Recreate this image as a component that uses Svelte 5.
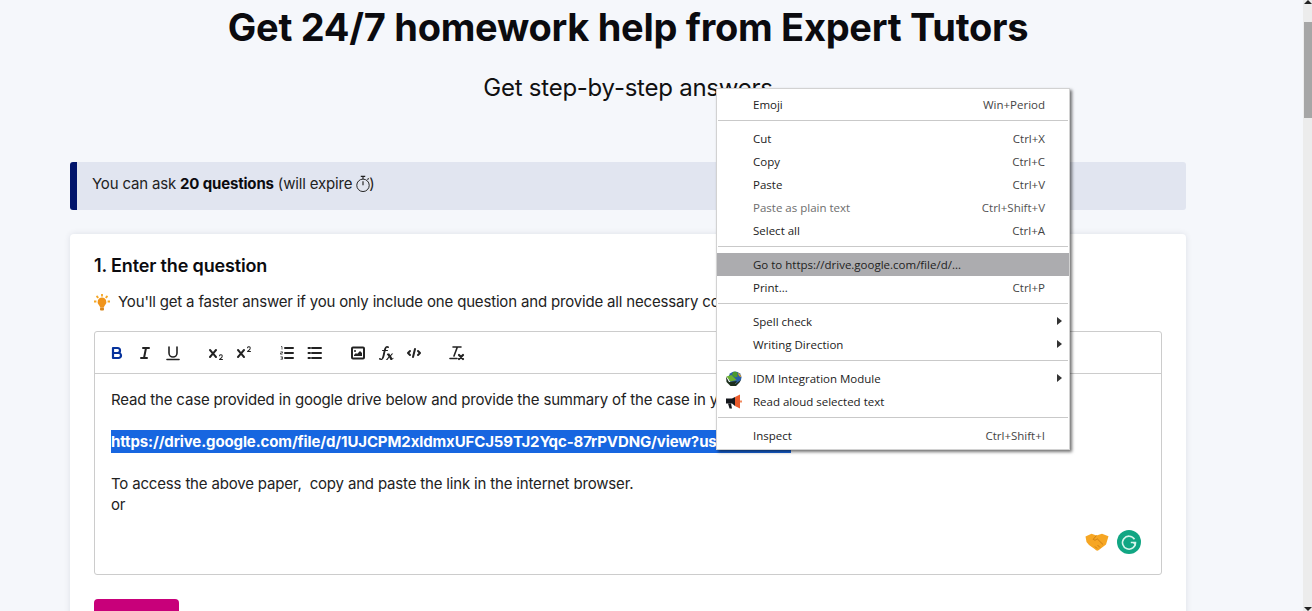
<script>
  const menu = [
    [{ l: 'Emoji', s: 'Win+Period' }],
    [{ l: 'Cut', s: 'Ctrl+X' }, { l: 'Copy', s: 'Ctrl+C' }, { l: 'Paste', s: 'Ctrl+V' }, { l: 'Paste as plain text', s: 'Ctrl+Shift+V', off: true }, { l: 'Select all', s: 'Ctrl+A' }],
    [{ l: 'Go to https://drive.google.com/file/d/...', hot: true }, { l: 'Print...', s: 'Ctrl+P' }],
    [{ l: 'Spell check', sub: true }, { l: 'Writing Direction', sub: true }],
    [{ l: 'IDM Integration Module', sub: true, icon: 'idm' }, { l: 'Read aloud selected text', icon: 'speak' }],
    [{ l: 'Inspect', s: 'Ctrl+Shift+I' }]
  ];
</script>

<div class="page">
  <main class="main">
    <div class="content">
      <h1>Get 24/7 homework help from Expert Tutors</h1>
      <h2>Get step-by-step answers</h2>

      <div class="alert">You can ask <b>20 questions</b> (will expire <svg class="watch" viewBox="0 0 18 20" width="16" height="18" aria-hidden="true">
          <circle cx="9" cy="11.5" r="7" fill="none" stroke="#222" stroke-width="1.1"/>
          <path d="M6.5 1.500h5M9 1.500v3M9 11.500V7M14 5l1.400-1.400" fill="none" stroke="#222" stroke-width="1.300"/>
        </svg>)</div>

      <section class="card">
        <h3>1. Enter the question</h3>
        <p class="hint">
          <svg viewBox="0 0 16 17" width="16" height="17" aria-hidden="true">
            <path d="M8 3.500a4.500 4.500 0 0 0-3 7.800c.7.700 1 1.300 1 2.200h4c0-.9.300-1.500 1-2.200a4.500 4.500 0 0 0-3-7.800z" fill="#f0941a"/>
            <rect x="6" y="13.500" width="4" height="3" rx="1" fill="#d9861a"/>
            <path d="M8 0v2.500M2.500 2l1.800 1.800M13.500 2l-1.800 1.800M0 7.500h2.400M13.600 7.500H16" stroke="#f5a623" stroke-width="1.800" fill="none"/>
          </svg>
          <span>You'll get a faster answer if you only include one question and provide all necessary context and details.</span>
        </p>

        <div class="editor">
          <div class="toolbar">
            <div class="group">
              <span class="tb"><svg viewBox="0 0 18 18" class="ic blue"><path d="M5,4H9.500A2.500,2.500,0,0,1,12,6.500v0A2.500,2.500,0,0,1,9.500,9H5V4Z"/><path d="M5,9h5.500A2.500,2.500,0,0,1,13,11.500v0A2.500,2.500,0,0,1,10.500,14H5V9Z"/></svg></span>
              <span class="tb"><svg viewBox="0 0 18 18" class="ic"><path d="M7 4h6M5 14h6M10 4 8 14"/></svg></span>
              <span class="tb"><svg viewBox="0 0 18 18" class="ic thin"><path d="M5,3V9a4,4,0,0,0,4,4h0a4,4,0,0,0,4-4V3"/><path d="M3 15.500h12"/></svg></span>
            </div>
            <div class="group">
              <span class="tb"><svg viewBox="0 0 18 18" class="ic fill"><path d="M15.500,15H13.861a3.858,3.858,0,0,0,1.914-2.975,1.800,1.800,0,0,0-1.600-1.751A1.921,1.921,0,0,0,12.021,11.700a0.500,0.500,0,1,0,.957.291h0a0.914,0.914,0,0,1,1.053-.725,0.810,0.810,0,0,1,.744.762c0,1.076-1.170,1.870-1.940,2.431A1.456,1.456,0,0,0,12,15.500a0.500,0.500,0,0,0,.500.500h3A0.500,0.500,0,0,0,15.500,15Z"/><path d="M9.650,5.241a1,1,0,0,0-1.409.108L6,7.964,3.759,5.349A1,1,0,0,0,2.192,6.592Q2.215,6.621,2.241,6.649L4.684,9.500,2.241,12.350A1,1,0,0,0,3.710,13.707q0.026-.028.049-.057L6,11.036,8.241,13.650a1,1,0,1,0,1.567-1.243Q9.785,12.378,9.759,12.350L7.316,9.500,9.759,6.651A1,1,0,0,0,9.650,5.241Z"/></svg></span>
              <span class="tb"><svg viewBox="0 0 18 18" class="ic fill"><path d="M15.500,7H13.861a4.015,4.015,0,0,0,1.914-2.975,1.800,1.800,0,0,0-1.600-1.751A1.922,1.922,0,0,0,12.021,3.700a0.500,0.500,0,1,0,.957.291,0.917,0.917,0,0,1,1.053-.725,0.810,0.810,0,0,1,.744.762c0,1.077-1.164,1.925-1.934,2.486A1.423,1.423,0,0,0,12,7.500a0.500,0.500,0,0,0,.500.500h3A0.500,0.500,0,0,0,15.500,7Z"/><path d="M9.650,5.241a1,1,0,0,0-1.409.108L6,7.964,3.759,5.349A1,1,0,0,0,2.192,6.592Q2.215,6.621,2.241,6.649L4.684,9.500,2.241,12.350A1,1,0,0,0,3.710,13.707q0.026-.028.049-.057L6,11.036,8.241,13.650a1,1,0,1,0,1.567-1.243Q9.785,12.378,9.759,12.350L7.316,9.500,9.759,6.651A1,1,0,0,0,9.650,5.241Z"/></svg></span>
            </div>
            <div class="group">
              <span class="tb"><svg viewBox="0 0 18 18" class="ic"><path d="M7 4h8M7 9h8M7 14h8"/><path class="tiny" d="M3 2.500h1v3M2.500 7.800h2v1.200h-2v1.200h2M2.500 12.800h2v1.200h-1.500M4.500 14v1.300h-2"/></svg></span>
              <span class="tb"><svg viewBox="0 0 18 18" class="ic"><path d="M6 4h9M6 9h9M6 14h9M2.500 4h1.500M2.500 9h1.500M2.500 14h1.500"/></svg></span>
            </div>
            <div class="group">
              <span class="tb"><svg viewBox="0 0 18 18" class="ic thick"><rect x="3" y="3.500" width="12" height="11" rx="1"/><circle cx="6" cy="7" r="1" class="solid"/><path class="solid" d="M5 12v-1l2-2 1 1 3-3 2 2v3z"/></svg></span>
              <span class="tb"><svg viewBox="0 0 18 18" class="ic fill"><path d="M11.759,2.482a2.561,2.561,0,0,0-3.530.607A7.656,7.656,0,0,0,6.800,6.200C6.109,9.188,5.275,14.677,4.150,14.927a1.545,1.545,0,0,0-1.300-.933A0.922,0.922,0,0,0,2,15.036S1.954,16,4.119,16s3.091-2.691,3.700-5.553c0.177-.826.360-1.726,0.554-2.600L8.775,6.200c0.381-1.421.807-2.521,1.306-2.676a1.014,1.014,0,0,0,1.020.560A0.966,0.966,0,0,0,11.759,2.482Z"/><rect x="5" y="6" width="6" height="1.100" rx=".5"/><path d="M10.400 9.600h1.900l1 1.700 1.500-1.700h1.400l-2.200 2.500 1.400 2.500.9-.8.400.4-1.800 1.700h-1.400l-1.200-2.300-1.900 2.300H8.800l2.700-3.100-1-1.900-.8.300z"/></svg></span>
              <span class="tb"><svg viewBox="0 0 18 18" class="ic"><path d="M5 7 3 9l2 2M13 7l2 2-2 2M10 5 8 13"/></svg></span>
            </div>
            <div class="group">
              <span class="tb"><svg viewBox="0 0 18 18" class="ic thin"><path d="M5 3h8M6 12 9.350 3"/><path d="M11 11l4 4M15 11l-4 4" class="bold"/><path d="M2 14.500h7"/></svg></span>
            </div>
          </div>
          <div class="body">
            <p>Read the case provided in google drive below and provide the summary of the case in your own words.</p>
            <p class="blank">&nbsp;</p>
            <p><mark>https://drive.google.com/file/d/1UJCPM2xldmxUFCJ59TJ2Yqc-87rPVDNG/view?usp=sharing</mark></p>
            <p class="blank">&nbsp;</p>
            <p>To access the above paper,&nbsp; copy and paste the link in the internet browser.</p>
            <p>or</p>
            <div class="floaters">
              <svg viewBox="0 0 24 18" width="24" height="18" aria-hidden="true">
                <path d="M0.500 3.500 6.500 0.800l5 1.700 5.500-1.700 6.500 2.500-2.500 8.200-7.500 5.800c-1.200.9-2.600.3-3.200-.7l-6.300-4.700L1.500 9z" fill="#f6a623"/>
                <path d="M11.500 2.500 8.200 6.300c1.200 1.400 2.900.8 4-.5l5.800 5.700M12.500 12l2.500 2.500M10 13.500l2 2" fill="none" stroke="#cf7f12" stroke-width="1"/>
              </svg>
              <svg viewBox="0 0 24 24" width="24" height="24" aria-hidden="true">
                <circle cx="12" cy="12" r="12" fill="#11a683"/>
                <path d="M17.500 9.200A6.500 6.500 0 1 0 18.500 12.500h-4.700" fill="none" stroke="#d8f5ec" stroke-width="1.600"/>
                <path d="M18.600 12.300v3.800l-3-3.500z" fill="#d8f5ec"/>
              </svg>
            </div>
          </div>
        </div>

        <div class="submit"></div>
      </section>
    </div>
  </main>

  <div class="scrollbar">
    <span class="arrow up"></span>
    <span class="thumb"></span>
    <span class="spacer"></span>
    <span class="arrow down"></span>
  </div>

  <div class="menu">
    {#each menu as group, i}
      {#if i > 0}<div class="sep"></div>{/if}
      {#each group as it}
        <div class="row" class:off={it.off} class:hot={it.hot}>
          <span class="mi">
            {#if it.icon === 'idm'}
              <svg viewBox="0 0 18 16" width="18" height="16" aria-hidden="true">
                <ellipse cx="10" cy="6.500" rx="6.500" ry="6" fill="#2a5fa8"/>
                <path d="M8 1c2-.6 4 0 5 1-1 1-1 2.500 0 3.500l-3 1L7 4z" fill="#4a9a2c"/>
                <path d="M13 1.800c1.500.8 3 2.500 3.300 4.200-1.500 0-3-1-3.300-4.200z" fill="#e3a32a"/>
                <path d="M1 5.500l3 5.500 8-1-2 3 6-4-1.500 2.500-3.500 3.500H5.500L1.500 11z" fill="#1d2f1d"/>
                <path d="M1.500 5.500 6.500 4l5 5-6 1.500z" fill="#6bb22f"/>
              </svg>
            {:else if it.icon === 'speak'}
              <svg viewBox="0 0 18 16" width="18" height="16" aria-hidden="true">
                <path d="M1 4.500h6v5H1z" fill="#14171c"/>
                <path d="M3 9.500h3l1 5H4.500z" fill="#14171c"/>
                <path d="M7 4.500 10 3v9L7 9.500z" fill="#14171c"/>
                <path d="M10 3l5-2.500v14L10 12z" fill="#ea5b2c"/>
                <path d="M15 6.500h2v2h-2z" fill="#f08a5f"/>
              </svg>
            {/if}
          </span>
          <span class="ml">{it.l}</span>
          {#if it.s}<span class="ms">{it.s}</span>{/if}
          {#if it.sub}<span class="caret"></span>{/if}
        </div>
      {/each}
    {/each}
  </div>
</div>

<style>
  :global(body) {
    margin: 0;
    overflow: hidden;
    background: #f5f7fb;
  }
  .page {
    display: flex;
    position: relative;
    width: 1312px;
    height: 611px;
    overflow: hidden;
    font-family: Inter, "Liberation Sans", sans-serif;
    color: #111;
  }
  .main {
    flex: 1;
    min-width: 0;
    overflow: hidden;
  }
  .content {
    width: 1116px;
    margin-left: 70px;
  }
  h1 {
    margin: 0;
    padding-top: 4px;
    font-size: 38px;
    line-height: 46px;
    font-weight: 700;
    text-align: center;
    color: #0b0b0f;
    letter-spacing: -0.28px;
  }
  h2 {
    margin: 18px 0 0;
    font-size: 24px;
    line-height: 40px;
    font-weight: 400;
    text-align: center;
    letter-spacing: -0.25px;
  }
  .alert {
    margin-top: 54px;
    height: 48px;
    box-sizing: border-box;
    padding-left: 15px;
    background: #e1e5f0;
    border-left: 7px solid #00146b;
    border-radius: 3px;
    font-size: 15px;
    line-height: 44px;
    letter-spacing: -0.17px;
    color: #222;
    white-space: nowrap;
  }
  .alert b { color: #0b0b0f; font-weight: 700; }
  .watch { vertical-align: -4px; margin: 0 -2px 0 -1px; }
  .card {
    margin-top: 24px;
    height: 420px;
    padding: 20px 24px 0;
    box-sizing: border-box;
    background: #fff;
    border-radius: 4px;
    box-shadow: 0 0 6px rgba(20, 30, 60, 0.1);
  }
  h3 {
    margin: 0;
    font-size: 18px;
    line-height: 24px;
    font-weight: 600;
    color: #0b0b0f;
    letter-spacing: -0.15px;
  }
  .hint {
    margin: 14px 0 0;
    display: flex;
    align-items: center;
    gap: 8px;
    font-size: 15px;
    line-height: 20px;
    letter-spacing: -0.17px;
    color: #222;
    white-space: nowrap;
  }
  .editor {
    margin-top: 19px;
    width: 1068px;
    height: 244px;
    box-sizing: border-box;
    border: 1px solid #ccc;
    border-radius: 3px;
    display: flex;
    flex-direction: column;
  }
  .toolbar {
    display: flex;
    gap: 15px;
    height: 42px;
    box-sizing: border-box;
    padding: 8px;
    border-bottom: 1px solid #ccc;
    align-items: center;
  }
  .group { display: flex; }
  .tb {
    width: 28px;
    height: 24px;
    display: flex;
    align-items: center;
    justify-content: center;
  }
  .ic {
    width: 18px;
    height: 18px;
    fill: none;
    stroke: #222;
    stroke-width: 2;
    stroke-linecap: round;
    stroke-linejoin: round;
  }
  .ic.thin { stroke-width: 1.600; }
  .ic.thick { stroke-width: 2; }
  .ic.blue { stroke: #06329c; stroke-width: 2.200; }
  .ic.fill { fill: #222; stroke: none; }
  .ic .tiny { stroke-width: 0.700; stroke-linecap: butt; }
  .ic .solid { fill: #222; stroke: none; }
  .ic .bold { stroke-width: 2.200; }
  .body {
    position: relative;
    flex: 1;
    padding: 15px 16px 0;
    font-size: 15px;
    line-height: 21px;
    letter-spacing: -0.17px;
    color: #222;
    overflow: hidden;
  }
  .body p {
    margin: 0;
    white-space: nowrap;
  }
  mark {
    background: #1766e0;
    color: #fff;
    font-weight: 700;
    letter-spacing: -0.12px;
    padding: 2px 0;
  }
  .floaters {
    position: absolute;
    right: 20px;
    bottom: 20px;
    display: flex;
    align-items: center;
    gap: 8px;
  }
  .submit {
    margin-top: 24px;
    width: 85px;
    height: 44px;
    background: #c8007a;
    border-radius: 4px;
  }
  .scrollbar {
    width: 9px;
    flex: none;
    display: flex;
    flex-direction: column;
    align-items: stretch;
    background: #ececec;
  }
  .arrow {
    flex: none;
    height: 22px;
    position: relative;
  }
  .arrow::after {
    content: "";
    position: absolute;
    left: 1px;
    border-left: 4px solid transparent;
    border-right: 4px solid transparent;
  }
  .arrow.up::after { top: 0; border-bottom: 4px solid #222; }
  .arrow.down::after { bottom: 0; border-top: 4px solid #222; }
  .thumb {
    flex: none;
    height: 96px;
    margin-left: 1px;
    background: #a6a6a6;
  }
  .spacer { flex: 1; }
  .menu {
    position: absolute;
    left: 716px;
    top: 88px;
    width: 354px;
    height: 362px;
    box-sizing: border-box;
    padding: 4px 0 3px;
    background: #fff;
    border: 1px solid #d2d2d2;
    box-shadow: 2px 2px 3px rgba(0, 0, 0, 0.55);
    font-family: "Open Sans", "Noto Sans", sans-serif;
    font-size: 11.5px;
    color: #222;
  }
  .row {
    display: flex;
    align-items: center;
    height: 23px;
    padding-right: 24px;
    position: relative;
    white-space: nowrap;
  }
  .row.off { color: #6d6d6d; }
  .row.hot { background: #acacaf; }
  .mi {
    width: 36px;
    padding-left: 8px;
    box-sizing: border-box;
    flex: none;
    display: flex;
    align-items: center;
  }
  .ml { flex: 1; }
  .ms { color: #444; }
  .row.off .ms { color: #555; }
  .caret {
    position: absolute;
    right: 7px;
    top: 7px;
    border-left: 5px solid #333;
    border-top: 4px solid transparent;
    border-bottom: 4px solid transparent;
  }
  .sep {
    height: 1px;
    margin: 4px 1px 6px;
    background: #c9c9c9;
  }
</style>
